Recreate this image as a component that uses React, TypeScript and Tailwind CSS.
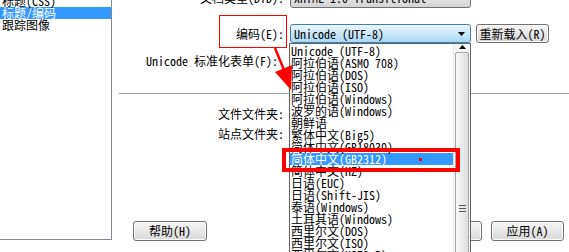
import React from "react";

const categories = ["标题(CSS)", "标题/编码", "跟踪图像"];

const encodings = [
  "Unicode (UTF-8)",
  "阿拉伯语(ASMO 708)",
  "阿拉伯语(DOS)",
  "阿拉伯语(ISO)",
  "阿拉伯语(Windows)",
  "波罗的语(Windows)",
  "朝鲜语",
  "繁体中文(Big5)",
  "简体中文(GB18030)",
  "简体中文(GB2312)",
  "简体中文(HZ)",
  "日语(EUC)",
  "日语(Shift-JIS)",
  "泰语(Windows)",
  "土耳其语(Windows)",
  "西里尔文(DOS)",
  "西里尔文(ISO)",
  "西里尔文(KOI8-R)",
];

function DownArrow() {
  return (
    <svg width="7" height="4" viewBox="0 0 7 4" className="shrink-0">
      <path d="M0 0h7L3.5 4z" fill="#000" />
    </svg>
  );
}

function Select({ value, focused }: { value: string; focused?: boolean }) {
  return (
    <div
      className={
        focused
          ? "flex h-full w-[181px] items-center justify-between rounded-[3px] border border-[#3c7fb1] bg-linear-to-b from-[#eaf6fd] to-[#a7d9f5] pl-[3px] pr-[5px]"
          : "flex h-full w-[181px] items-center justify-between rounded-[3px] border border-[#707070] bg-linear-to-b from-[#f2f2f2] to-[#d4d4d4] pl-[3px] pr-[5px]"
      }
    >
      <span className="whitespace-pre">{value}</span>
      <DownArrow />
    </div>
  );
}

function Button({ label, className }: { label: string; className: string }) {
  return (
    <div
      className={
        "flex h-full items-center justify-center whitespace-nowrap rounded-[3px] border border-[#707070] bg-linear-to-b from-[#f6f6f6] to-[#d8d8d8] shadow-[inset_0_0_0_1px_#fcfcfc] " +
        className
      }
    >
      {label}
    </div>
  );
}

function FormRow({ label, children, className }: { label: string; children?: React.ReactNode; className: string }) {
  return (
    <div className={"flex items-center " + className}>
      <div className="w-[172px] shrink-0 whitespace-pre text-right">{label}</div>
      <div className="ml-[6px] flex h-full items-center gap-[5px]">{children}</div>
    </div>
  );
}

export default function App() {
  return (
    <div className="relative h-[252px] w-[569px] overflow-hidden bg-white text-[12px] leading-[12px] text-black font-['Noto_Sans_Mono_CJK_SC','Noto_Sans_CJK_SC',sans-serif]">
      <div className="flex h-full">
        <aside className="h-[240px] w-[112px] shrink-0 border-r border-b border-[#828790]">
          <ul className="-mt-[5px]">
            {categories.map((c) => (
              <li
                key={c}
                className={
                  c === "标题/编码"
                    ? "flex h-[12px] items-center bg-[#3399ff] pl-[2px] text-white"
                    : "flex h-[12px] items-center pl-[2px]"
                }
              >
                {c}
              </li>
            ))}
          </ul>
        </aside>

        <main className="flex flex-1 flex-col">
          <FormRow label="文档类型(DTD):" className="-mt-[12px] h-[20px]">
            <Select value="XHTML 1.0 Transitional" />
          </FormRow>
          <FormRow label="编码(E):" className="mt-[16px] h-[19px]">
            <Select value="Unicode (UTF-8)" focused />
            <Button label="重新载入(R)" className="w-[73px]" />
          </FormRow>
          <FormRow label="Unicode 标准化表单(F): " className="mt-[8px] h-[19px]">
            <Select value="C (规范分解，后跟规范合成)" />
          </FormRow>
          <div className="mt-[23px] ml-[7px] h-px bg-[#a0a0a0]" />
          <FormRow label="文件文件夹:" className="mt-[10px] h-[19px]" />
          <FormRow label="站点文件夹:" className="mt-[1px] h-[19px]" />
          <div className="mt-[78px] flex h-[20px] items-center">
            <Button label="帮助(H)" className="ml-[21px] w-[74px]" />
            <div className="flex-1" />
            <Button label="取消" className="w-[74px]" />
            <Button label="应用(A)" className="ml-[9px] mr-[5px] w-[73px]" />
          </div>
        </main>
      </div>

      {/* open encoding dropdown */}
      <div className="absolute left-[289px] top-[43px] flex h-[220px] w-[182px] border border-[#646464] bg-white">
        <ul className="flex-1 pt-[1px]">
          {encodings.map((e) => (
            <li
              key={e}
              className={
                e === "简体中文(GB2312)"
                  ? "flex h-[12px] items-center whitespace-pre bg-[#3399ff] pl-[1px] text-white"
                  : "flex h-[12px] items-center whitespace-pre pl-[1px]"
              }
            >
              {e}
            </li>
          ))}
        </ul>
        <div className="flex w-[17px] flex-col border-l border-[#e6e6e6] bg-[#f5f5f5]">
          <div className="flex h-[17px] items-center justify-center">
            <svg width="7" height="4" viewBox="0 0 7 4">
              <path d="M3.5 0L7 4H0z" fill="#000" />
            </svg>
          </div>
          <div className="mx-px mt-[2px] h-[320px] rounded-[2px] border border-[#a5a5a5] bg-linear-to-r from-[#f7f7f7] to-[#dedede] pt-[152px]">
            <div className="mx-auto flex w-[7px] flex-col gap-[2px]">
              <div className="h-px bg-[#555]" />
              <div className="h-px bg-[#555]" />
              <div className="h-px bg-[#555]" />
            </div>
          </div>
        </div>
      </div>

      {/* annotations */}
      <div className="absolute left-[219px] top-[15px] h-[33px] w-[68px] border border-[#ff0000]" />
      <div className="absolute left-[282px] top-[148px] h-[24px] w-[178px] border-4 border-[#ff0000]" />
      <div className="absolute left-[419px] top-[158px] h-[3px] w-[3px] bg-[#ff0000]" />
      <svg className="absolute left-0 top-0" width="569" height="252">
        <line x1="275" y1="48" x2="284" y2="70" stroke="#ff0000" strokeWidth="2.5" />
        <path d="M275 72L292 65L291 90z" fill="#ff0000" />
      </svg>
    </div>
  );
}
